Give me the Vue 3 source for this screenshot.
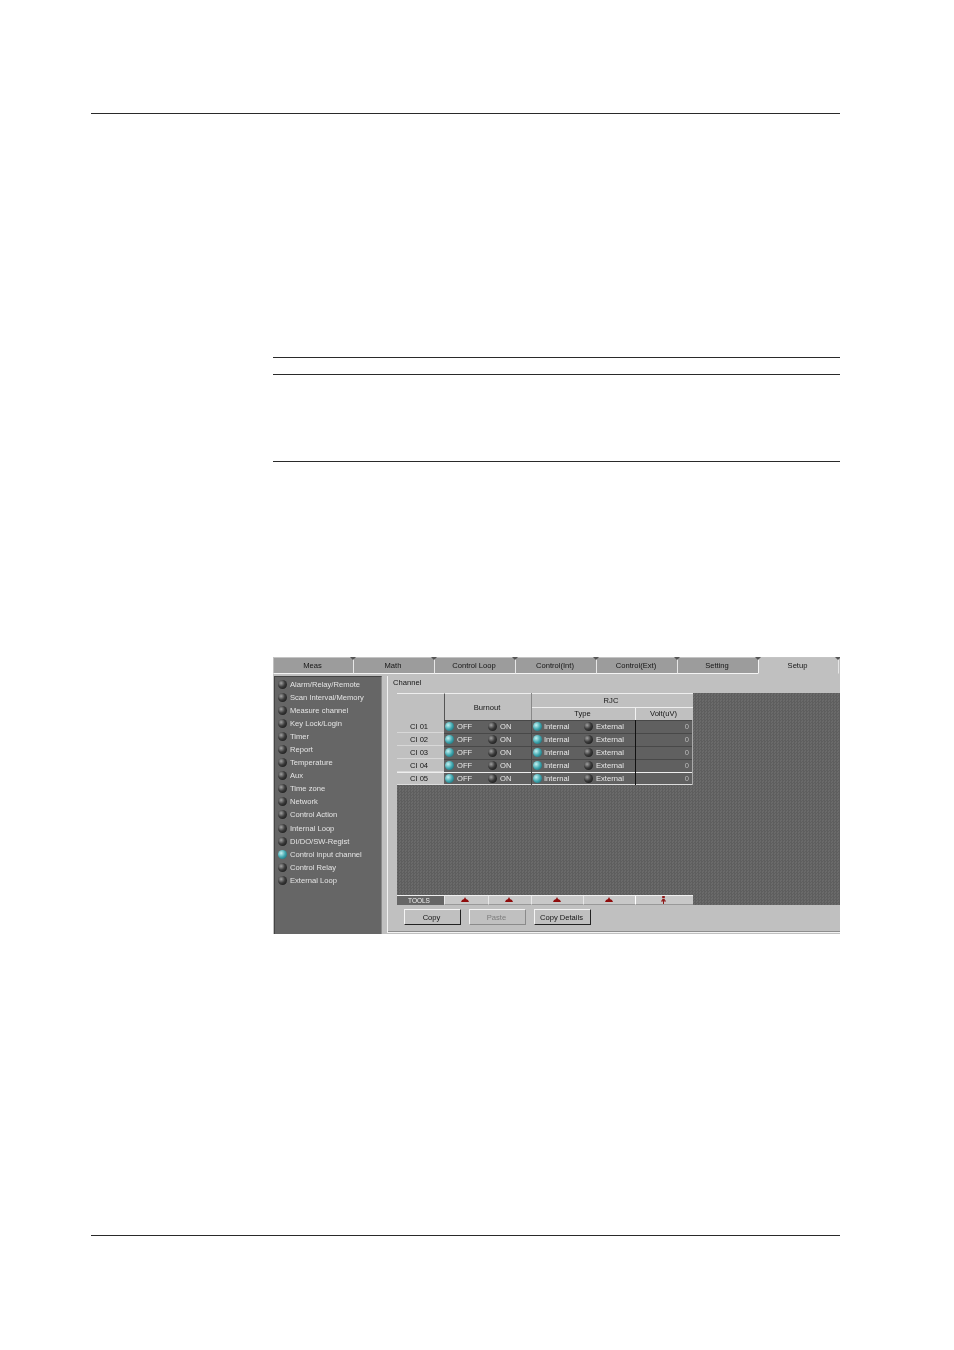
<script setup>
const tabs = ['Meas', 'Math', 'Control Loop', 'Control(Int)', 'Control(Ext)', 'Setting', 'Setup']
const menu = ['Alarm/Relay/Remote', 'Scan Interval/Memory', 'Measure channel', 'Key Lock/Login', 'Timer', 'Report', 'Temperature', 'Aux', 'Time zone', 'Network', 'Control Action', 'Internal Loop', 'DI/DO/SW-Regist', 'Control input channel', 'Control Relay', 'External Loop']
const rows = ['CI 01', 'CI 02', 'CI 03', 'CI 04', 'CI 05']
</script>

<template>
  <div class="page">
    <div class="rule wide first"></div>
    <div class="rule narrow r2"></div>
    <div class="rule narrow r3"></div>
    <div class="rule narrow r4"></div>

    <div class="shot">
      <div class="tabs">
        <div v-for="(t, i) in tabs" :key="t" class="tab" :class="{ active: i === 6 }">{{ t }}</div>
      </div>
      <div class="body">
        <div class="side">
          <div v-for="(m, i) in menu" :key="m" class="side-item">
            <span class="led" :class="{ on: i === 13 }"></span>
            <span>{{ m }}</span>
          </div>
        </div>
        <div class="group">
          <div class="legend">Channel</div>
          <div class="sheet">
            <div class="table">
              <div class="head">
                <div class="corner"></div>
                <div class="h-burn">Burnout</div>
                <div class="h-rjc">
                  <div class="h-rjc-top">RJC</div>
                  <div class="h-rjc-sub">
                    <div class="h-type">Type</div>
                    <div class="h-volt">Volt(uV)</div>
                  </div>
                </div>
              </div>
              <div v-for="(r, i) in rows" :key="r" class="row" :class="{ sel: i === 4 }">
                <div class="r-name">{{ r }}</div>
                <div class="r-burn">
                  <div class="opt o-off"><span class="led on"></span>OFF</div>
                  <div class="opt"><span class="led"></span>ON</div>
                </div>
                <div class="r-type">
                  <div class="opt o-int"><span class="led on"></span>Internal</div>
                  <div class="opt"><span class="led"></span>External</div>
                </div>
                <div class="r-volt">0</div>
              </div>
            </div>
            <div class="tools">
              <div class="t-name">TOOLS</div>
              <div class="t-cell c1"><svg width="8" height="5" viewBox="0 0 8 5"><path d="M0 5 L1 3 L3 2 L4 0 L5 2 L7 3 L8 5 Z" fill="#8f0c0c"/></svg></div>
              <div class="t-cell c2"><svg width="8" height="5" viewBox="0 0 8 5"><path d="M0 5 L1 3 L3 2 L4 0 L5 2 L7 3 L8 5 Z" fill="#8f0c0c"/></svg></div>
              <div class="t-cell c3"><svg width="8" height="5" viewBox="0 0 8 5"><path d="M0 5 L1 3 L3 2 L4 0 L5 2 L7 3 L8 5 Z" fill="#8f0c0c"/></svg></div>
              <div class="t-cell c4"><svg width="8" height="5" viewBox="0 0 8 5"><path d="M0 5 L1 3 L3 2 L4 0 L5 2 L7 3 L8 5 Z" fill="#8f0c0c"/></svg></div>
              <div class="t-cell c5"><svg width="5" height="8" viewBox="0 0 5 8"><path d="M1.2 0 H3.8 V2 H1.2 Z M1.2 2.8 H3.8 V4.5 H5 V5.5 H3 V8 H2 V5.5 H0 V4.5 H1.2 Z" fill="#8f1a1a"/></svg></div>
            </div>
          </div>
          <div class="buttons">
            <div class="btn">Copy</div>
            <div class="btn off">Paste</div>
            <div class="btn">Copy Details</div>
          </div>
        </div>
      </div>
    </div>

    <div class="rule wide last"></div>
  </div>
</template>

<style scoped>
.page {
  width: 954px;
  height: 1350px;
  background: #fff;
  padding-top: 113px;
  box-sizing: border-box;
  overflow: hidden;
  font-family: "Liberation Sans", Arial, sans-serif;
  font-size: 7.6px;
  color: #151515;
}
.rule { height: 1px; background: #2a2a2a; }
.wide { margin-left: 91px; width: 749px; }
.narrow { margin-left: 273px; width: 567px; }
.r2 { margin-top: 243px; }
.r3 { margin-top: 16px; }
.r4 { margin-top: 86px; }
.last { margin-top: 301px; }

.shot {
  margin-top: 195px;
  margin-left: 273px;
  width: 567px;
  height: 277px;
  background: #c0c0c0;
  display: flex;
  flex-direction: column;
  overflow: hidden;
  filter: blur(0.3px);
}
.tabs { display: flex; height: 17px; flex: none; background: #c0c0c0; }
.tab {
  position: relative;
  width: 81px;
  box-sizing: border-box;
  border-top: 1px solid #c4c4c4;
  border-bottom: 1px solid #f4f4f4;
  border-left: 1px solid #e6e6e6;
  background: #9c9c9c;
  display: flex;
  align-items: center;
  justify-content: center;
  padding: 0 2px 1px 0;
}
.tab:first-child { border-left-color: #c0c0c0; width: 80px; }
.tab::after {
  content: "";
  position: absolute;
  right: -3px;
  top: -1px;
  border-left: 3px solid transparent;
  border-right: 3px solid transparent;
  border-top: 3px solid #555;
  z-index: 1;
}
.tab.active {
  background: #c0c0c0;
  border-bottom-color: #c0c0c0;
  border-left-color: #f4f4f4;
  border-right: 1px solid #e6e6e6;
}

.body { flex: 1; display: flex; min-height: 0; padding-top: 2px; padding-left: 1px; }
.side {
  width: 108px;
  flex: none;
  box-sizing: border-box;
  background: #666;
  border-top: 1px solid #444;
  border-left: 1px solid #444;
  border-right: 1px solid #8a8a8a;
  padding: 1px 0 0 3px;
  color: #e4e4e4;
}
.side-item { display: flex; align-items: center; height: 13.05px; white-space: nowrap; }
.side-item .led { margin-right: 3px; }

.led {
  display: inline-block;
  flex: none;
  width: 9px;
  height: 9px;
  border-radius: 50%;
  background: radial-gradient(circle at 35% 35%, #a0a0a0 0%, #3c3c3c 45%, #0c0c0c 100%);
}
.led.on { background: radial-gradient(circle at 35% 35%, #c6f2f2 0%, #3fa6ae 50%, #0f5560 100%); }

.group {
  flex: 1;
  margin-left: 5px;
  margin-bottom: 1px;
  border-left: 1px solid #f2f2f2;
  border-bottom: 1px solid #f2f2f2;
  box-shadow: inset 0 -1px 0 #8e8e8e;
  min-width: 0;
  display: flex;
  flex-direction: column;
}
.legend { height: 17px; flex: none; padding: 1px 0 0 5px; box-sizing: border-box; line-height: 12px; }
.sheet {
  height: 212px;
  flex: none;
  margin-left: 9px;
  display: flex;
  flex-direction: column;
  justify-content: space-between;
  background-color: #646464;
  background-image: conic-gradient(#5e5e5e 25%, #6a6a6a 0 50%, #5e5e5e 0 75%, #6a6a6a 0);
  background-size: 3px 3px;
}
.table { width: 296px; }
.head { display: flex; height: 27px; background: #c0c0c0; text-align: center; }
.corner { width: 47px; border-top: 1px solid #eee; box-sizing: border-box; }
.h-burn {
  width: 87px;
  box-sizing: border-box;
  border-top: 1px solid #eee;
  border-left: 1px solid #555;
  display: flex;
  align-items: center;
  justify-content: center;
  padding-right: 2px;
}
.h-rjc { flex: 1; border-left: 1px solid #888; box-sizing: border-box; display: flex; flex-direction: column; }
.h-rjc-top { height: 14px; line-height: 14px; border-top: 1px solid #eee; box-sizing: border-box; padding-right: 3px; }
.h-rjc-sub { display: flex; height: 13px; border-top: 1px solid #eee; box-sizing: border-box; line-height: 12px; }
.h-type { width: 103px; padding-right: 2px; box-sizing: border-box; }
.h-volt { flex: 1; border-left: 1px solid #f2f2f2; padding-right: 2px; }

.row { display: flex; height: 13px; box-sizing: border-box; }
.r-name {
  width: 47px;
  flex: none;
  background: #c0c0c0;
  text-align: center;
  line-height: 13px;
  box-sizing: border-box;
  padding-right: 3px;
  border-bottom: 1px solid #d8d8d8;
}
.r-burn, .r-type {
  display: flex;
  align-items: center;
  background: #606060;
  color: #e8e8e8;
  box-sizing: border-box;
  box-shadow: inset 0 1px 0 #484848;
}
.r-burn { width: 87px; padding-left: 1px; }
.r-type { width: 104px; border-left: 1px solid #444; padding-left: 1px; }
.r-volt {
  flex: 1;
  background: #606060;
  color: #bdbdbd;
  text-align: right;
  line-height: 13px;
  padding-right: 3px;
  border-left: 1px solid #111;
  border-right: 1px solid #aaa;
  box-shadow: inset 0 1px 0 #484848;
}
.sel .r-name, .sel .r-burn, .sel .r-type, .sel .r-volt {
  box-shadow: inset 0 1px 0 #eee, inset 0 -1px 0 #ddd;
}
.sel .r-name { border-bottom: 0; }
.opt { display: flex; align-items: center; white-space: nowrap; }
.opt .led { margin-right: 3px; }
.o-off { width: 43px; }
.o-int { width: 51px; }
.o-int .led { margin-right: 2px; }

.tools { display: flex; width: 296px; height: 10px; background: #c8c8c8; border-top: 1px solid #f0f0f0; box-sizing: border-box; }
.t-name { width: 47px; background: #666; color: #eee; text-align: center; font-size: 6.5px; line-height: 9px; padding-right: 3px; box-sizing: border-box; }
.t-cell { display: flex; align-items: center; justify-content: center; border-bottom: 1px solid #999; box-sizing: border-box; border-left: 1px solid #e8e8e8; padding: 0 2px 1px 0; }
.c1, .c2 { width: 43.5px; }
.c3 { width: 52px; }
.c4 { width: 52px; }
.c5 { flex: 1; border-left: 1px solid #fff; }

.buttons { display: flex; gap: 8px; padding: 4px 0 0 16px; }
.btn {
  width: 57px;
  height: 16px;
  box-sizing: border-box;
  border-top: 1px solid #f4f4f4;
  border-left: 1px solid #f4f4f4;
  border-right: 1px solid #222;
  border-bottom: 1px solid #222;
  display: flex;
  align-items: center;
  justify-content: center;
  padding-right: 2px;
  background: #c0c0c0;
}
.btn.off { color: #7c7c7c; border-right-color: #8a8a8a; border-bottom-color: #8a8a8a; }
</style>
